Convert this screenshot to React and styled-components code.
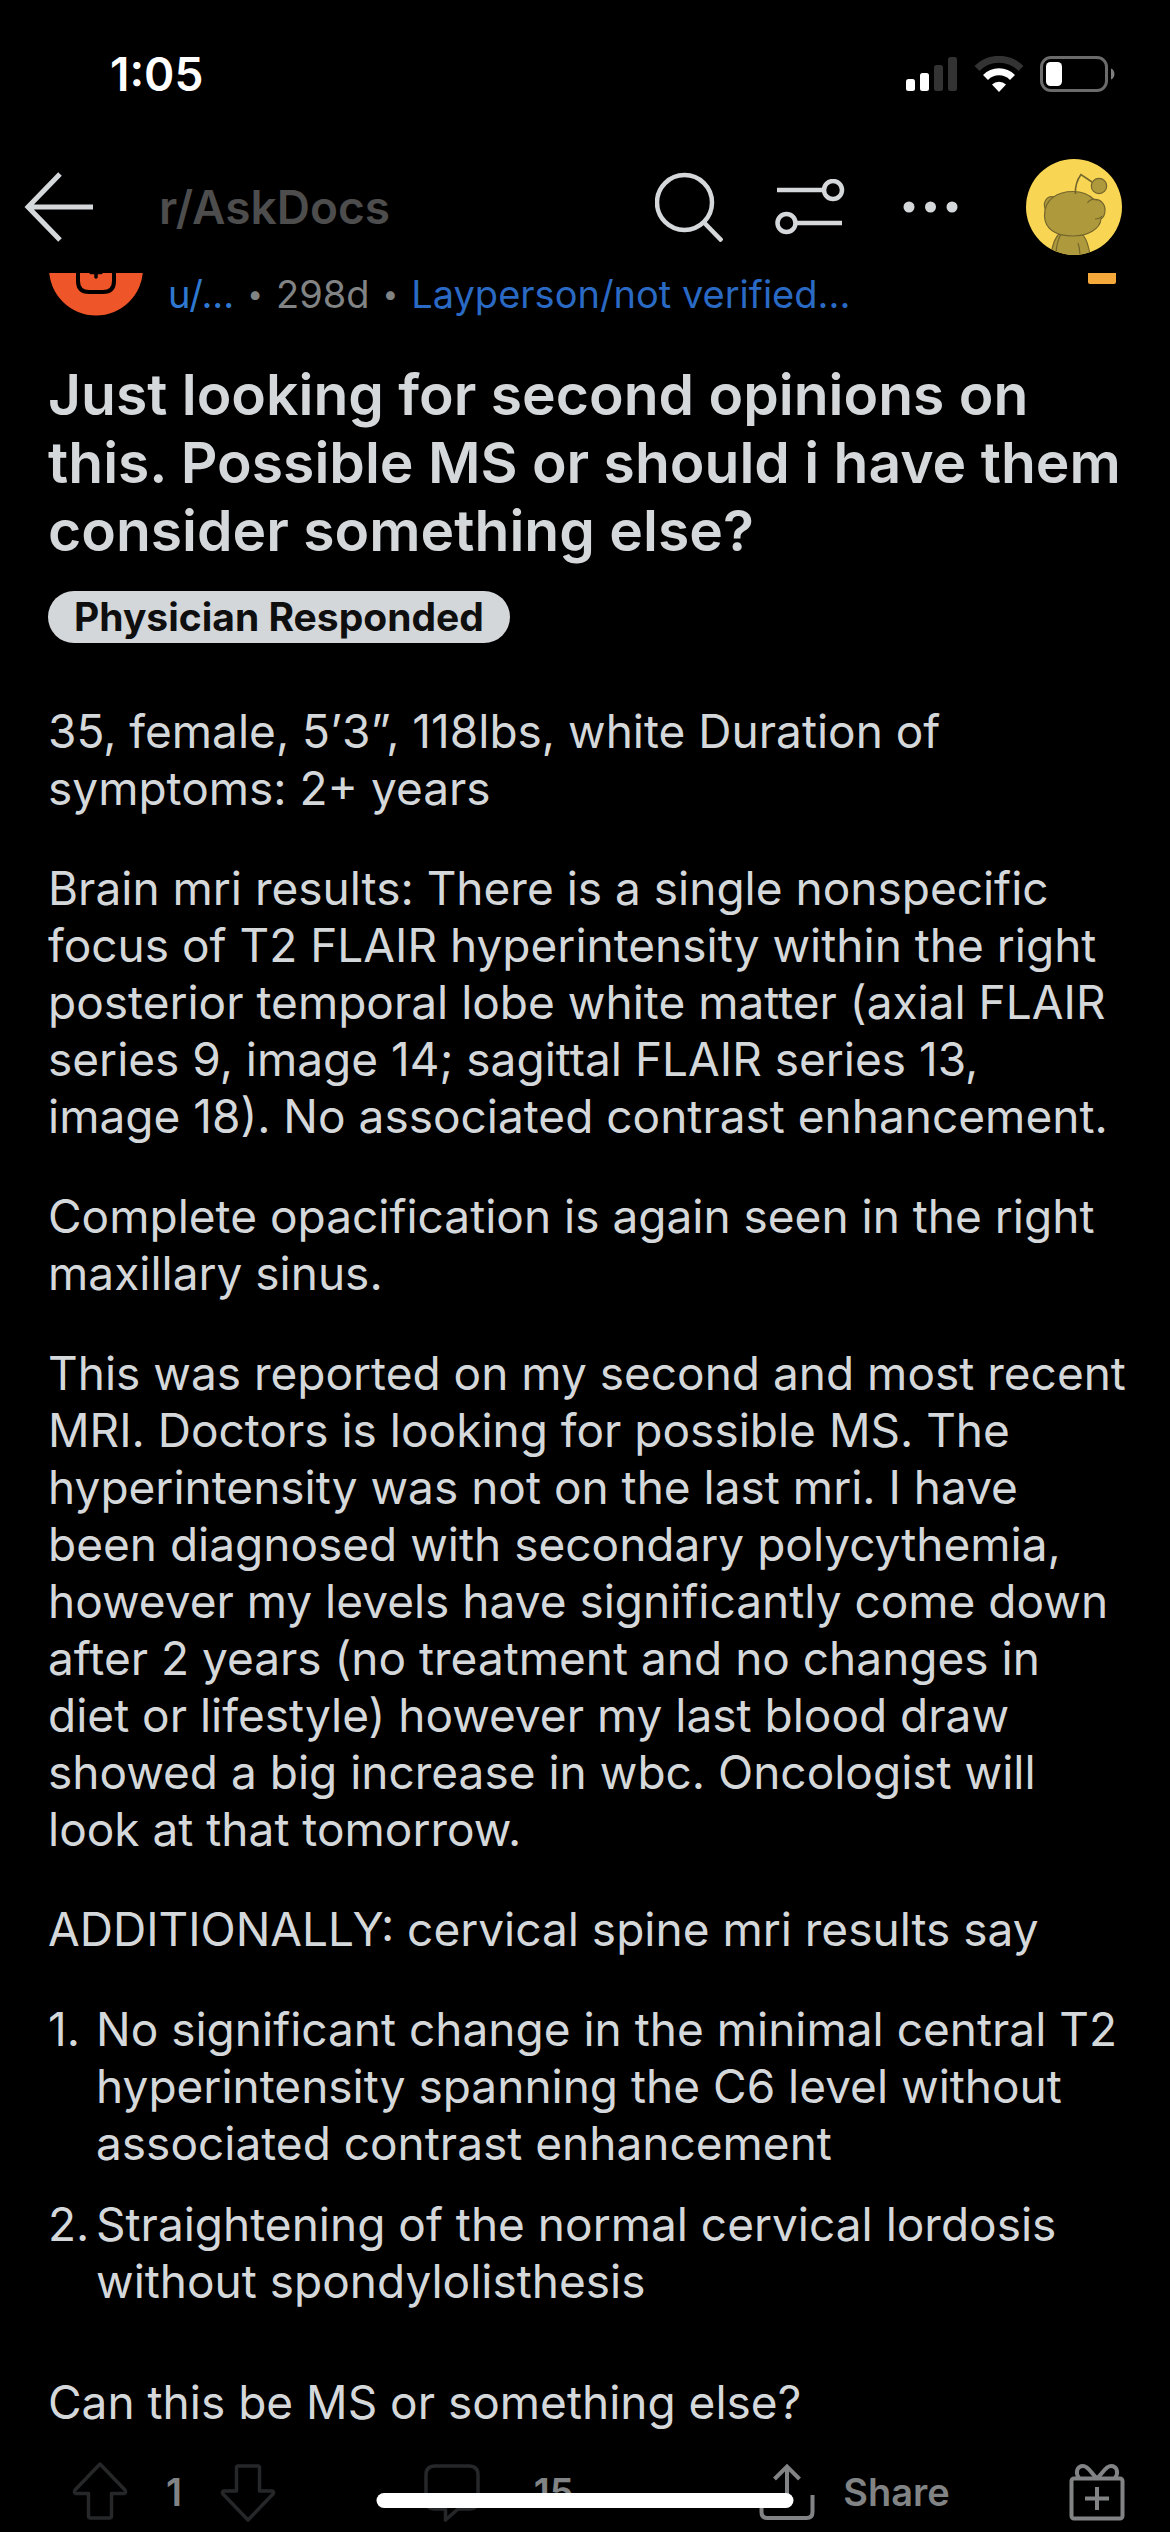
import React, { useState } from "react";
import styled, { createGlobalStyle } from "styled-components";

const GlobalStyle = createGlobalStyle`
  * {
    box-sizing: border-box;
  }
  body {
    margin: 0;
    background-color: #000;
    color: #d5d8da;
    font-family: Inter, "Liberation Sans", sans-serif;
  }
  h1, p, ol {
    margin: 0;
    padding: 0;
  }
`;

const Container = styled.div`
  min-height: 100vh;
  display: flex;
  flex-direction: column;
  position: relative;
  overflow: hidden;
`;

const StatusBar = styled.div`
  height: 148px;
  padding: 0 54px 0 110px;
  display: flex;
  align-items: center;
  justify-content: space-between;
`;

const Time = styled.span`
  font-size: 46px;
  font-weight: 600;
  color: #fff;
`;

const StatusIcons = styled.div`
  display: flex;
  align-items: center;
  gap: 16px;
`;

const Header = styled.header`
  height: 125px;
  padding: 0 48px 8px 24px;
  display: flex;
  align-items: center;
`;

const IconButton = styled.button`
  display: flex;
  padding: 0;
  border: none;
  background: none;
  color: ${(props) => props.$color || "#d5d8da"};
  cursor: pointer;
`;

const Community = styled.a`
  flex: 1;
  margin-left: 64px;
  font-size: 46px;
  font-weight: 600;
  color: #4d4d4d;
  text-decoration: none;
`;

const HeaderActions = styled.div`
  display: flex;
  align-items: center;
  gap: 52px;
`;

const Profile = styled.div`
  display: flex;
  margin-left: 9px;
`;

const PostInfo = styled.div`
  padding: 0 48px;
  display: flex;
  align-items: flex-start;
  font-size: 38px;
  line-height: 42px;
  color: #818384;
`;

const InfoText = styled.div`
  flex: 1;
  display: flex;
  gap: 13px;
  margin-left: 24px;
`;

const Dot = styled.span`
  font-size: 28px;
`;

const UserLink = styled.a`
  color: ${(props) => (props.$flair ? "#2a6ac4" : "#2f78d0")};
  text-decoration: none;
`;

const Award = styled.span`
  width: 28px;
  height: 11px;
  margin-right: 6px;
  border-radius: 0 0 2px 2px;
  background-color: #f5a93b;
`;

const Post = styled.main`
  flex: 1;
  padding: 45px 42px 0 48px;
`;

const Title = styled.h1`
  font-size: 57px;
  font-weight: 600;
  line-height: 68px;
`;

const Flair = styled.span`
  display: inline-block;
  margin: 26px 0 60px;
  padding: 0 26px;
  border-radius: 26px;
  background-color: #d3d7da;
  color: #0f0f10;
  font-size: 39px;
  font-weight: 700;
  line-height: 52px;
`;

const Text = styled.p`
  margin-bottom: 43px;
  font-size: 46px;
  line-height: 57px;

  &:last-child {
    margin-bottom: 0;
  }
`;

const List = styled.ol`
  margin-bottom: 64px;
  display: flex;
  flex-direction: column;
  gap: 24px;
  list-style: none;
  font-size: 46px;
  line-height: 57px;
`;

const ListItem = styled.li`
  display: grid;
  grid-template-columns: 48px 1fr;
`;

const Footer = styled.footer`
  height: 80px;
  padding: 0 45px 0 72px;
  display: grid;
  grid-template-columns: 352fr 336fr 310fr auto;
  align-items: center;
  color: #818384;
`;

const Group = styled.div`
  display: flex;
  align-items: center;
  gap: ${(props) => props.$gap};
`;

const Count = styled.span`
  font-size: 38px;
  font-weight: 600;
`;

const ShareButton = styled.button`
  display: flex;
  align-items: center;
  gap: 28px;
  padding: 0;
  border: none;
  background: none;
  color: inherit;
  font: inherit;
  cursor: pointer;
`;

const HomeIndicator = styled.div`
  position: absolute;
  left: 50%;
  bottom: 24px;
  width: 417px;
  height: 15px;
  transform: translateX(-50%);
  border-radius: 8px;
  background-color: #fff;
`;

const Signal = () => (
  <svg width="52" height="36" viewBox="0 0 52 36" fill="#fff">
    <rect x="0" y="23" width="9" height="12" rx="2.5" />
    <rect x="14" y="17" width="9" height="18" rx="2.5" />
    <rect x="28" y="9" width="9" height="26" rx="2.5" fill="#333" />
    <rect x="42" y="1" width="9" height="34" rx="2.5" fill="#333" />
  </svg>
);

const Wifi = () => (
  <svg width="50" height="36" viewBox="0 0 50 36" fill="none">
    <path d="M3 12.5A31 31 0 0 1 47 12.5" stroke="#333" strokeWidth="7" />
    <path d="M11.5 21.5A19 19 0 0 1 38.5 21.5" stroke="#fff" strokeWidth="7" />
    <path d="M18 28.5A10 10 0 0 1 32 28.5L25 36Z" fill="#fff" />
  </svg>
);

const Battery = () => (
  <svg width="76" height="36" viewBox="0 0 76 36" fill="none">
    <rect x="1.5" y="1.5" width="65" height="33" rx="9.5" stroke="#6b6b6b" strokeWidth="3" />
    <rect x="6" y="6" width="16" height="24" rx="4.5" fill="#fff" />
    <path d="M71 12.5C75.6 14 75.6 22 71 23.5Z" fill="#7f7f7f" />
  </svg>
);

const Back = () => (
  <svg width="71" height="70" viewBox="0 0 71 70" fill="none" stroke="currentColor" strokeWidth="5">
    <path d="M36 2L4 35L36 68M4 35H69" />
  </svg>
);

const Search = () => (
  <svg width="68" height="70" viewBox="0 0 68 70" fill="none" stroke="currentColor" strokeWidth="4.5">
    <circle cx="29.5" cy="30.5" r="27.5" />
    <path d="M48.5 50L67 69" />
  </svg>
);

const Sort = () => (
  <svg width="70" height="56" viewBox="0 0 70 56" fill="none" stroke="currentColor" strokeWidth="4.5">
    <path d="M2 11H48M22 44H67" />
    <circle cx="58" cy="11" r="9" />
    <circle cx="11.5" cy="44" r="9" />
  </svg>
);

const More = () => (
  <svg width="68" height="12" viewBox="-6 0 68 12" fill="currentColor">
    <circle cx="6" cy="6" r="5.5" />
    <circle cx="27.5" cy="6" r="5.5" />
    <circle cx="49" cy="6" r="5.5" />
  </svg>
);

const Snoo = () => (
  <svg width="96" height="96" viewBox="0 0 96 96" fill="none">
    <defs>
      <clipPath id="face">
        <circle cx="48" cy="48" r="48" />
      </clipPath>
    </defs>
    <circle cx="48" cy="48" r="48" fill="#f8d654" />
    <g clipPath="url(#face)" fill="#ae993d" stroke="#74662c" strokeWidth="1.2">
      <path d="M34 74C28 79 26 87 25 97H64C63 88 61 81 57 76Z" />
      <path d="M35 75C31 82 30 89 30 97M52 84C54 89 54 93 54 97" fill="none" />
      <path d="M20 52C16 44 20 36 29 38Z" />
      <path
        d="M18.5 57C18 40 32 32.5 47 32.5C55 32.5 62 34.5 68 40.5C75 40 79 45 79 51C79 55 78 58 75 60C74 70 62 77 47 77C31 77 19 71 18.5 57Z"
      />
      <path d="M61.5 44C64 40 68 40 71 41M69 60C72 60 74 60 76 57" fill="none" />
      <path d="M49.5 35C49 28 51 21 55 15.5L66 23" fill="none" strokeWidth="1.6" />
      <circle cx="73" cy="27" r="7.7" />
    </g>
  </svg>
);

// only the lower half shows below the header
const CommunityAvatar = () => (
  <svg width="96" height="43" viewBox="0 53 96 43" fill="none">
    <circle cx="48" cy="48.5" r="47" fill="#ee5528" />
    <path d="M30 44V61Q30 72 41 72H55Q66 72 66 61V44" stroke="#000" strokeWidth="4" />
    <path d="M48 50V57M43 52.5H53" stroke="#000" strokeWidth="3.5" strokeLinecap="round" />
  </svg>
);

const Vote = ({ down }) => (
  <svg width="56" height="60" viewBox="0 0 56 60" fill="none" stroke="currentColor" strokeWidth="3.5" strokeLinejoin="round">
    {down ? (
      <path d="M18 4Q16.5 4 16.5 6V29H4Q1.5 29.5 3 32L28 58L53 32Q54.5 29.5 52 29H39.5V6Q39.5 4 38 4Z" />
    ) : (
      <path d="M28 2L3 28Q1.5 31 4 31.5H16.5V54Q16.5 56 18.5 56H37.5Q39.5 56 39.5 54V31.5H52Q54.5 31 53 28Z" />
    )}
  </svg>
);

const Comment = () => (
  <svg width="56" height="60" viewBox="0 0 56 60" fill="none" stroke="currentColor" strokeWidth="3.5" strokeLinejoin="round">
    <path d="M11 4H45Q54 4 54 13V38Q54 47 45 47H34L21.5 58V47H11Q2 47 2 38V13Q2 4 11 4Z" />
  </svg>
);

const Share = () => (
  <svg width="56" height="60" viewBox="0 0 56 60" fill="none" stroke="currentColor" strokeWidth="4">
    <path d="M28 5V44M15.5 17L28 4.5L40.5 17M2.5 33V50Q2.5 56 8.5 56H47.5Q53.5 56 53.5 50V33" />
  </svg>
);

const Gift = () => (
  <svg width="56" height="60" viewBox="0 0 56 60" fill="none" stroke="currentColor" strokeWidth="4">
    <rect x="2.5" y="16.5" width="51" height="40" rx="2.5" />
    <path d="M10 16C6 11 8 4 14 4C20 4 23 13 28 16C33 13 36 4 42 4C48 4 50 11 46 16M28 25V48M16 36.5H40" />
  </svg>
);

const paragraphs = [
  "35, female, 5’3”, 118lbs, white Duration of symptoms: 2+ years",
  "Brain mri results: There is a single nonspecific focus of T2 FLAIR hyperintensity within the right posterior temporal lobe white matter (axial FLAIR series 9, image 14; sagittal FLAIR series 13, image\u00a018). No associated contrast enhancement.",
  "Complete opacification is again seen in the right maxillary sinus.",
  "This was reported on my second and most recent MRI. Doctors is looking for possible MS. The hyperintensity was not on the last mri. I have been diagnosed with secondary polycythemia, however my levels have significantly come down after 2 years (no treatment and no changes in diet or lifestyle) however my last blood draw showed a big increase in wbc. Oncologist will look at that tomorrow.",
  "ADDITIONALLY: cervical spine mri results say",
];

const results = [
  "No significant change in the minimal central T2 hyperintensity spanning the C6 level without associated contrast enhancement",
  "Straightening of the normal cervical lordosis without spondylolisthesis",
];

export default function App() {
  const [votes, setVotes] = useState(1);

  return (
    <Container>
      <GlobalStyle />
      <StatusBar>
        <Time>1:05</Time>
        <StatusIcons>
          <Signal />
          <Wifi />
          <Battery />
        </StatusIcons>
      </StatusBar>
      <Header>
        <IconButton aria-label="Back">
          <Back />
        </IconButton>
        <Community href="#">r/AskDocs</Community>
        <HeaderActions>
          <IconButton aria-label="Search">
            <Search />
          </IconButton>
          <IconButton aria-label="Sort">
            <Sort />
          </IconButton>
          <IconButton aria-label="More">
            <More />
          </IconButton>
          <Profile>
            <IconButton aria-label="Profile">
              <Snoo />
            </IconButton>
          </Profile>
        </HeaderActions>
      </Header>
      <PostInfo>
        <CommunityAvatar />
        <InfoText>
          <UserLink href="#">u/...</UserLink>
          <Dot>•</Dot>
          <span>298d</span>
          <Dot>•</Dot>
          <UserLink href="#" $flair>
            Layperson/not verified...
          </UserLink>
        </InfoText>
        <Award />
      </PostInfo>
      <Post>
        <Title>
          Just looking for second opinions on this. Possible MS or should i have
          them consider something else?
        </Title>
        <Flair>Physician Responded</Flair>
        {paragraphs.map((text) => (
          <Text key={text}>{text}</Text>
        ))}
        <List>
          {results.map((text, index) => (
            <ListItem key={text}>
              <span>{index + 1}.</span>
              <span>{text}</span>
            </ListItem>
          ))}
        </List>
        <Text>Can this be MS or something else?</Text>
      </Post>
      <Footer>
        <Group $gap="38px">
          <IconButton aria-label="Upvote" $color="#262728" onClick={() => setVotes(votes + 1)}>
            <Vote />
          </IconButton>
          <Count>{votes}</Count>
          <IconButton aria-label="Downvote" $color="#262728" onClick={() => setVotes(votes - 1)}>
            <Vote down />
          </IconButton>
        </Group>
        <Group $gap="54px">
          <IconButton aria-label="Comments" $color="#262728">
            <Comment />
          </IconButton>
          <Count>15</Count>
        </Group>
        <ShareButton>
          <Share />
          <Count>Share</Count>
        </ShareButton>
        <IconButton aria-label="Give award" $color="#818384">
          <Gift />
        </IconButton>
      </Footer>
      <HomeIndicator />
    </Container>
  );
}
